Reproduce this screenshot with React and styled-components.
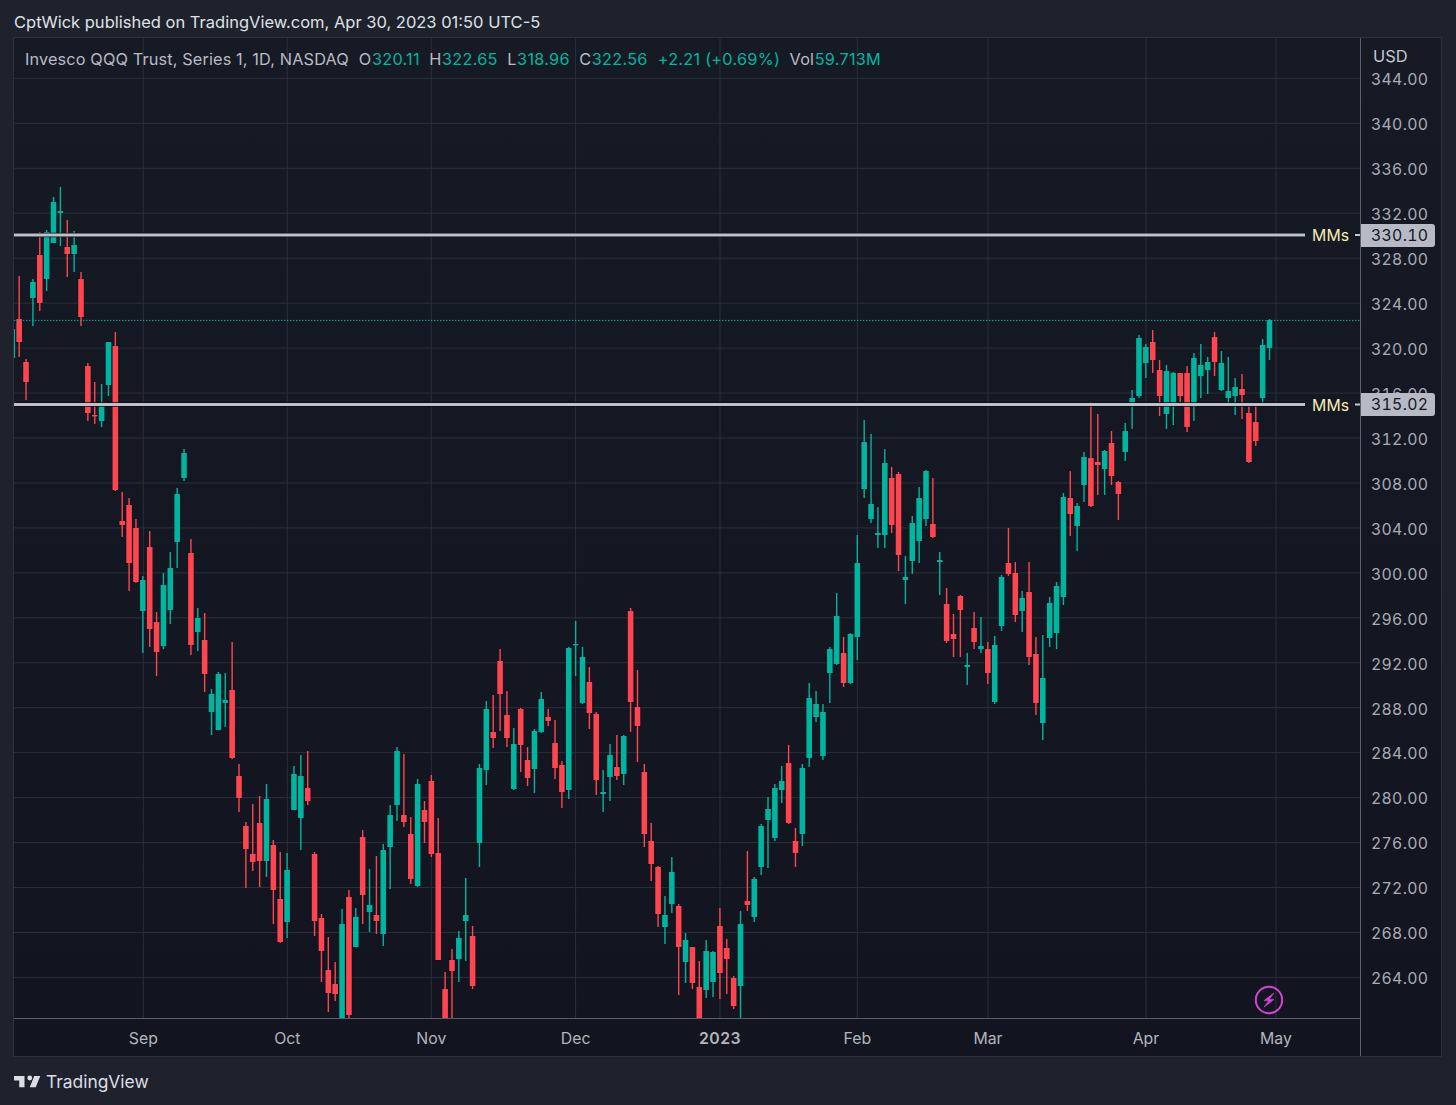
import styled, { createGlobalStyle } from "styled-components";

const GlobalStyle = createGlobalStyle`
  html, body {
    margin: 0;
    background: #1e222d;
  }
`;

const TEAL = "#00b5a0";
const RED = "#ff4650";

// [colour, high, body top, body bottom, low] in page pixels, one per day
const CANDLES = [
  ["t",329,329,358,358],["r",276,319,342,357],["r",359,362,382,400],["t",279,282,298,326],["r",232,255,303,311],
  ["t",230,232,279,291],["t",197,202,243,243],["t",187,211,213,246],["r",220,247,254,277],["t",231,245,254,272],
  ["r",272,279,317,326],["r",363,366,413,421],["r",382,415,416,424],["t",384,405,421,427],["t",342,342,385,396],
  ["r",332,346,490,491],["r",492,521,525,537],["r",498,505,563,591],["r",519,528,582,583],["t",576,580,611,653],
  ["r",531,547,629,647],["r",612,622,652,676],["t",573,585,646,649],["t",552,568,610,624],["t",488,494,542,568],
  ["t",449,453,478,481],["r",539,553,645,655],["t",608,618,632,651],["r",613,640,674,692],["t",689,694,712,735],
  ["t",672,674,730,730],["t",673,700,703,727],["r",642,690,758,759],["r",764,776,798,812],["r",822,826,849,888],
  ["r",804,854,862,871],["r",796,823,861,887],["t",784,799,861,877],["r",840,845,890,924],["r",852,899,942,943],
  ["t",853,870,922,938],["t",766,774,810,810],["t",755,776,818,850],["r",751,788,801,805],["r",852,854,921,936],
  ["r",914,918,951,982],["r",937,970,993,1012],["r",962,984,994,1001],["t",909,924,1030,1030],["r",890,897,1015,1018],
  ["t",908,917,947,947],["r",830,837,895,924],["t",869,905,912,932],["r",856,915,921,934],["t",844,850,934,946],
  ["t",805,815,847,889],["t",747,751,805,821],["r",754,815,822,827],["r",817,834,879,884],["t",779,784,886,887],
  ["r",801,810,822,843],["r",775,781,854,857],["r",818,853,960,960],["r",972,989,1030,1030],["r",949,960,971,1030],
  ["t",931,938,959,982],["t",878,915,921,961],["r",926,936,986,989],["t",764,768,843,867],["t",701,709,770,785],
  ["r",695,732,738,748],["r",649,661,694,731],["r",691,715,738,747],["t",728,744,789,790],["r",708,709,745,772],
  ["r",747,760,778,786],["t",729,731,769,793],["t",692,699,732,733],["r",709,717,721,726],["r",720,743,768,779],
  ["r",761,765,792,808],["t",647,648,790,799],["t",621,644,645,676],["t",647,657,703,704],["r",667,682,713,729],
  ["r",712,714,780,795],["t",770,792,794,812],["t",744,755,777,801],["r",735,767,776,780],["t",735,736,774,785],
  ["r",608,611,702,732],["r",670,707,726,762],["r",764,772,834,847],["r",823,841,864,881],["r",866,867,914,927],
  ["t",896,915,927,944],["t",857,872,904,913],["r",904,906,947,995],["t",933,940,962,983],["r",947,947,983,989],
  ["r",961,987,1030,1030],["t",940,951,990,998],["t",951,952,982,997],["r",908,926,973,999],["r",939,948,959,994],
  ["r",976,978,1006,1009],["t",911,924,986,1018],["r",851,901,905,911],["t",877,879,917,922],["t",824,826,867,875],
  ["t",797,809,820,868],["t",784,788,838,841],["t",766,781,790,803],["r",745,763,823,824],["r",828,841,853,867],
  ["t",764,768,834,846],["t",683,698,758,767],["t",691,704,717,722],["t",704,712,756,760],["t",647,649,673,703],
  ["t",593,616,664,665],["r",637,653,683,687],["t",633,634,683,684],["t",535,563,637,660],["t",420,442,489,498],
  ["t",434,504,519,523],["t",507,533,535,548],["t",449,463,535,548],["r",467,478,525,533],["r",472,474,555,571],
  ["t",556,577,580,604],["t",516,523,561,574],["t",487,498,541,563],["t",470,471,519,526],["r",478,524,537,538],
  ["t",552,560,562,595],["r",588,604,641,643],["r",614,634,639,657],["r",595,596,610,657],["t",653,665,667,685],
  ["r",612,628,642,649],["t",617,646,649,653],["r",642,649,673,684],["t",636,645,702,704],["t",575,577,626,631],
  ["r",528,563,574,576],["r",562,573,615,622],["t",591,598,611,632],["r",562,592,657,665],["r",637,654,703,715],
  ["t",635,678,723,740],["t",597,603,638,647],["t",582,586,633,649],["t",493,497,597,605],["r",471,498,514,536],
  ["t",503,506,526,551],["t",452,457,485,502],["r",402,458,506,507],["r",414,462,465,495],["t",450,451,469,495],
  ["r",431,443,476,485],["r",481,482,494,520],["t",423,431,452,461],["t",390,398,403,429],["t",335,338,396,398],
  ["t",344,347,363,378],["r",330,342,360,373],["r",360,370,396,416],["t",365,371,414,429],["t",372,373,405,425],
  ["r",373,373,396,402],["r",366,373,427,432],["t",353,358,407,421],["t",344,365,376,398],["t",357,362,370,394],
  ["r",332,337,362,376],["t",351,363,390,391],["t",357,391,398,405],["t",378,387,396,415],["r",374,389,395,419],
  ["r",406,413,462,463],["r",406,422,441,446],["t",339,345,398,405],["t",319,320,348,360],
];

const candleX = (i) => 12.3 + i * 6.87;

// gridlines, page pixels
const ROW_COUNT = 21;
const ROW_HEIGHT = 44.95;
const FIRST_ROW = 78.9;
const PRICES = Array.from({ length: ROW_COUNT }, (_, i) => (344 - i * 4).toFixed(2));

const DATES = [
  { label: "Sep", x: 143.3 },
  { label: "Oct", x: 287.3 },
  { label: "Nov", x: 431.3 },
  { label: "Dec", x: 575.6 },
  { label: "2023", x: 720, bold: true },
  { label: "Feb", x: 857.3 },
  { label: "Mar", x: 988 },
  { label: "Apr", x: 1146 },
  { label: "May", x: 1276 },
];

const LEVELS = [
  { price: "330.10", y: 235 },
  { price: "315.02", y: 404.5 },
];

const Page = styled.div`
  width: 1456px;
  height: 1105px;
  display: flex;
  flex-direction: column;
  background: #1e222d;
  font-family: Inter, "Liberation Sans", sans-serif;
  overflow: hidden;
`;

const Header = styled.div`
  height: 37px;
  padding: 7px 0 0 14px;
  box-sizing: border-box;
  display: flex;
  align-items: center;
  font-size: 16.5px;
  color: #dfe1e6;
`;

const Chart = styled.div`
  margin-left: 13px;
  width: 1429px;
  height: 1020px;
  box-sizing: border-box;
  border: 1px solid #2d313d;
  display: grid;
  grid-template-columns: 1346px 1fr;
  grid-template-rows: 980px 1fr;
  background: linear-gradient(#161a25, #12151f);
`;

const Plot = styled.div`
  position: relative;
  grid-column: 1;
  grid-row: 1;
  overflow: hidden;
`;

const PlotSvg = styled.svg`
  display: block;
`;

const Legend = styled.div`
  position: absolute;
  top: 10px;
  left: 11px;
  display: flex;
  align-items: center;
  height: 22px;
  font-size: 16.3px;
  letter-spacing: 0.13px;
  color: #b8bbc4;
  white-space: nowrap;
`;

const LegendName = styled.span`
  margin-right: 10px;
`;

const LegendItem = styled.span`
  margin-right: 9.5px;
`;

const Value = styled.span`
  margin-left: 0.5px;
  letter-spacing: 0.25px;
  color: ${TEAL};
`;

const LevelName = styled.div`
  position: absolute;
  right: 11px;
  top: ${(p) => p.$y - 38 - 10}px;
  height: 22px;
  line-height: 22px;
  font-size: 15.8px;
  color: #f3eeb2;
`;

const PriceAxis = styled.div`
  position: relative;
  grid-column: 2;
  grid-row: 1 / 3;
  border-left: 1px solid #5d606b;
  display: flex;
  flex-direction: column;
  padding-top: ${FIRST_ROW + 1 - 38 - ROW_HEIGHT / 2}px;
  overflow: hidden;
`;

const Currency = styled.div`
  position: absolute;
  top: 0;
  left: 0;
  right: 0;
  height: 35px;
  box-sizing: border-box;
  padding: 7px 0 0 12px;
  background: #161a25;
  line-height: 22px;
  font-size: 16.4px;
  color: #c3c6ce;
`;

const Price = styled.div`
  flex: 0 0 ${ROW_HEIGHT}px;
  display: flex;
  align-items: center;
  padding-left: 10px;
  font-size: 15.8px;
  font-variant-numeric: tabular-nums;
  letter-spacing: 0.3px;
  color: #a9acb6;
`;

const Tag = styled.div`
  position: absolute;
  left: 0;
  top: ${(p) => p.$y - 38 - 11.5}px;
  width: 74px;
  height: 23px;
  box-sizing: border-box;
  padding-left: 10px;
  display: flex;
  align-items: center;
  border-radius: 0 3px 3px 0;
  background: #b7bac4;
  font-size: 15.8px;
  font-variant-numeric: tabular-nums;
  letter-spacing: 0.3px;
  color: #131722;
`;

const TimeAxis = styled.div`
  grid-column: 1;
  grid-row: 2;
  border-top: 1px solid #5d606b;
  padding-top: 2px;
  display: flex;
  align-items: center;
  font-size: 15.8px;
  color: #b2b5be;
`;

const DateTick = styled.div`
  flex: 0 0 0;
  width: 0;
  min-width: 0;
  margin-left: ${(p) => p.$gap}px;
  display: flex;
  justify-content: center;
  white-space: nowrap;
  font-weight: ${(p) => (p.$bold ? 600 : 400)};
  letter-spacing: ${(p) => (p.$bold ? "0.5px" : "0")};
`;

const Footer = styled.div`
  flex: 1;
  display: flex;
  align-items: center;
  gap: 5px;
  padding: 0 0 0 14px;
  font-size: 17.4px;
  color: #dcdee4;
`;

const LogoSvg = styled.svg`
  display: block;
  width: 27px;
  height: 21px;
  fill: #dcdee4;
`;

const BoltCircle = styled.svg`
  position: absolute;
  left: ${1269.3 - 14 - 15}px;
  top: ${1000.3 - 38 - 15}px;
  width: 30px;
  height: 30px;
`;

const Candle = ({ i, data }) => {
  const [kind, high, top, bottom, low] = data;
  const x = candleX(i);
  const color = kind === "t" ? TEAL : RED;
  return (
    <g>
      <rect x={x - 3.3} y={top - 0.7} width={6.6} height={bottom - top + 1.4} fill="#0b0d13" opacity="0.55" />
      <line x1={x} x2={x} y1={high} y2={low} stroke={color} strokeWidth={1.4} />
      <rect x={x - 2.8} y={top} width={5.6} height={Math.max(bottom - top, 1.4)} fill={color} />
    </g>
  );
};

const ChartDrawing = () => (
  <PlotSvg width="1346" height="980" viewBox="14 38 1346 980">
    {PRICES.map((p, i) => (
      <line key={p} x1="14" x2="1360" y1={FIRST_ROW - 0.5 + i * ROW_HEIGHT} y2={FIRST_ROW - 0.5 + i * ROW_HEIGHT} stroke="#2b2f3b" />
    ))}
    {DATES.map((d) => (
      <line key={d.label} x1={d.x} x2={d.x} y1="38" y2="1018" stroke="#2b2f3b" />
    ))}
    {CANDLES.map((c, i) => (
      <Candle key={i} i={i} data={c} />
    ))}
    <line x1="14" x2="1360" y1="320.4" y2="320.4" stroke={TEAL} strokeWidth="1" strokeDasharray="1.4 1.6" />
    {LEVELS.map((l) => (
      <g key={l.price}>
        <line x1="14" x2="1305" y1={l.y} y2={l.y} stroke="#0a0c12" strokeWidth="4.6" />
        <line x1="14" x2="1305" y1={l.y} y2={l.y} stroke="#bfc0cb" strokeWidth="2.8" />
        <line x1="1355" x2="1360" y1={l.y} y2={l.y} stroke="#c6c7d1" strokeWidth="2" />
      </g>
    ))}
  </PlotSvg>
);

const App = () => {
  return (
    <Page>
      <GlobalStyle />
      <Header>CptWick published on TradingView.com, Apr 30, 2023 01:50 UTC-5</Header>
      <Chart>
        <Plot>
          <ChartDrawing />
          <Legend>
            <LegendName>Invesco QQQ Trust, Series 1, 1D, NASDAQ</LegendName>
            <LegendItem>O<Value>320.11</Value></LegendItem>
            <LegendItem>H<Value>322.65</Value></LegendItem>
            <LegendItem>L<Value>318.96</Value></LegendItem>
            <LegendItem>C<Value>322.56</Value></LegendItem>
            <LegendItem><Value>+2.21 (+0.69%)</Value></LegendItem>
            <LegendItem>Vol<Value>59.713M</Value></LegendItem>
          </Legend>
          {LEVELS.map((l) => (
            <LevelName key={l.price} $y={l.y}>MMs</LevelName>
          ))}
          <BoltCircle viewBox="0 0 30 30">
            <circle cx="15" cy="15" r="13.2" fill="none" stroke="#d443d6" strokeWidth="2" />
            <path d="M20 8 L10 15.6 H14.8 L10.2 22 L20 14.4 H15.2 Z" fill="#d443d6" stroke="#d443d6" strokeWidth="0.7" strokeLinejoin="round" />
          </BoltCircle>
        </Plot>
        <PriceAxis>
          {PRICES.map((p) => (
            <Price key={p}>{p}</Price>
          ))}
          <Currency>USD</Currency>
          {LEVELS.map((l) => (
            <Tag key={l.price} $y={l.y}>{l.price}</Tag>
          ))}
        </PriceAxis>
        <TimeAxis>
          {DATES.map((d, i) => (
            <DateTick key={d.label} $gap={d.x - (i ? DATES[i - 1].x : 14)} $bold={d.bold}>
              {d.label}
            </DateTick>
          ))}
        </TimeAxis>
      </Chart>
      <Footer>
        <LogoSvg viewBox="0 3 36 21">
          <path d="M14 6H0v6h7v9h7V6Zm15 15h-8l6-15h8l-6 15Zm-8-9a3.2 3.2 0 1 0 0-6.4 3.2 3.2 0 0 0 0 6.4Z" />
        </LogoSvg>
        TradingView
      </Footer>
    </Page>
  );
};

export default App;
